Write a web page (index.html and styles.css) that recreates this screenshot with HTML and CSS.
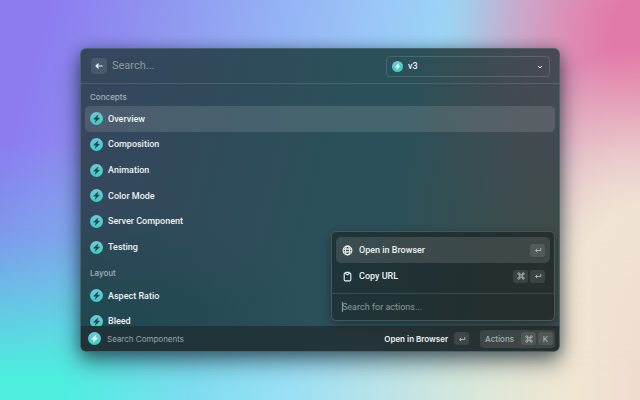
FILE: index.html
```html
<!DOCTYPE html>
<html lang="en">
<head>
<meta charset="utf-8">
<meta name="viewport" content="width=device-width, initial-scale=1">
<title>Search Components</title>
<link rel="stylesheet" href="styles.css">
</head>
<body>
<svg class="sprite" aria-hidden="true">
  <defs>
    <linearGradient id="teal" x1="0" y1="0" x2="0" y2="1">
      <stop offset="0" stop-color="#72c6da"/>
      <stop offset="1" stop-color="#39cfc0"/>
    </linearGradient>
    <symbol id="bolt" viewBox="0 0 26 26">
      <circle cx="13" cy="13" r="13" fill="url(#teal)"/>
      <path d="M15.800 5.600 6.800 14.200q-.5.7.4.8h4.600L9.800 20.600q0 .8.7.3l9-8.600q.5-.8-.4-.9h-4.500l2-5.300q0-.9-.8-.5Z" fill="currentColor"/>
    </symbol>
    <symbol id="return" viewBox="0 0 16 16">
      <path d="M13.500 4v5H3M6.500 5.500 3 9l3.500 3.500" fill="none" stroke="currentColor" stroke-width="2"/>
    </symbol>
    <symbol id="command" viewBox="0 0 16 16">
      <path d="M5.500 5.500h5v5h-5ZM5.500 5.500H4a2 2 0 1 1 1.500-1.500ZM10.500 5.500V4a2 2 0 1 1 1.500 1.500ZM10.500 10.500H12a2 2 0 1 1-1.500 1.500ZM5.500 10.500V12a2 2 0 1 1-1.500-1.500Z" fill="none" stroke="currentColor" stroke-width="2"/>
    </symbol>
  </defs>
</svg>
<main class="window">
  <header class="header">
    <button class="back" type="button" aria-label="Back">
      <svg class="glyph" viewBox="0 0 16 16"><path d="M14.500 8H2M6.500 4 2 8l4.500 4" fill="none" stroke="currentColor" stroke-width="2.400" stroke-linecap="round" stroke-linejoin="round"/></svg>
    </button>
    <input class="search" type="search" placeholder="Search..." aria-label="Search">
    <div class="version">
      <svg class="version-icon"><use href="#bolt"/></svg>
      <select class="version-select" aria-label="Version"><option>v3</option></select>
      <svg class="chevron" viewBox="0 0 8 8"><path d="m2 3 2 2 2-2" fill="none" stroke="currentColor" stroke-width="1"/></svg>
    </div>
  </header>

  <div class="results">
    <h2 class="section">Concepts</h2>
    <ul class="list concepts">
      <li><a class="item selected" href="#overview"><svg class="icon"><use href="#bolt"/></svg>Overview</a></li>
      <li><a class="item" href="#composition"><svg class="icon"><use href="#bolt"/></svg>Composition</a></li>
      <li><a class="item" href="#animation"><svg class="icon"><use href="#bolt"/></svg>Animation</a></li>
      <li><a class="item" href="#color-mode"><svg class="icon"><use href="#bolt"/></svg>Color Mode</a></li>
      <li><a class="item" href="#server-component"><svg class="icon"><use href="#bolt"/></svg>Server Component</a></li>
      <li><a class="item" href="#testing"><svg class="icon"><use href="#bolt"/></svg>Testing</a></li>
    </ul>
    <h2 class="section">Layout</h2>
    <ul class="list layout">
      <li><a class="item" href="#aspect-ratio"><svg class="icon"><use href="#bolt"/></svg>Aspect Ratio</a></li>
      <li><a class="item" href="#bleed"><svg class="icon"><use href="#bolt"/></svg>Bleed</a></li>
    </ul>
  </div>

  <footer class="footer">
    <svg class="icon light"><use href="#bolt"/></svg>
    <span class="command-name">Search Components</span>
    <button class="primary" type="button">Open in Browser
      <kbd class="key"><svg class="glyph"><use href="#return"/></svg></kbd>
    </button>
    <button class="actions" type="button"><span class="actions-label">Actions</span>
      <kbd class="key"><svg class="glyph"><use href="#command"/></svg></kbd>
      <kbd class="key">K</kbd>
    </button>
  </footer>

  <section class="popup" aria-label="Actions">
    <div class="menu">
      <button class="action current" type="button">
        <svg class="action-icon" viewBox="0 0 20 20"><g fill="none" stroke="currentColor" stroke-width="2"><circle cx="10" cy="10" r="8"/><ellipse cx="10" cy="10" rx="3.700" ry="8"/><path d="M2.500 7.500h15M2.500 12.500h15"/></g></svg>
        <span class="action-label">Open in Browser</span>
        <kbd class="key"><svg class="glyph"><use href="#return"/></svg></kbd>
      </button>
      <button class="action" type="button">
        <svg class="action-icon" viewBox="0 0 20 20"><g fill="none" stroke="currentColor" stroke-width="2" stroke-linejoin="round"><path d="M7 3.500H6a2 2 0 0 0-2 2V16a2 2 0 0 0 2 2h8a2 2 0 0 0 2-2V5.500a2 2 0 0 0-2-2h-1"/><path d="M7 2.500h6v2.300L10 7 7 4.800Z"/></g></svg>
        <span class="action-label">Copy URL</span>
        <kbd class="key"><svg class="glyph"><use href="#command"/></svg></kbd>
        <kbd class="key"><svg class="glyph"><use href="#return"/></svg></kbd>
      </button>
    </div>
    <input class="action-search" type="text" placeholder="Search for actions..." aria-label="Search for actions">
  </section>
</main>
</body>
</html>
```
FILE: styles.css
```css
* {
  box-sizing: border-box;
}

body {
  position: relative;
  margin: 0;
  min-height: 100vh;
  display: flex;
  align-items: center;
  justify-content: center;
  font: 500 9px/12px Roboto, Inter, sans-serif;
  color: #eef3f2;
  background: linear-gradient(90deg, #4eeedf 10%, #7edcf0 30%, #9ce0f6 46%, #c0e4e6 62%, #dfe8d8 77%, #f1e6d2 90%, #f0dcd2 100%);
}

/* Cool-to-pink band that fades into the base gradient below it */
body::before {
  content: "";
  position: absolute;
  inset: 0;
  background:
    radial-gradient(ellipse 28% 68% at 100% 80%, #f0e4d4 40%, rgba(240, 228, 214, 0) 100%),
    radial-gradient(ellipse 33% 66% at 102% 10%, #e27aa8 20%, rgba(226, 122, 168, 0) 100%),
    linear-gradient(106deg, #8c7cf0 7%, #9092f0 20%, #94b0f4 36%, #9ac6f8 50%, #9bd9f4 63%, #cfc6dc 78%, #dcc4d4 100%);
  -webkit-mask-image: linear-gradient(#000 35%, rgba(0, 0, 0, 0.75) 60%, transparent 94%);
  mask-image: linear-gradient(#000 35%, rgba(0, 0, 0, 0.75) 60%, transparent 94%);
}

.sprite {
  position: absolute;
  width: 0;
  height: 0;
}

button,
input,
select {
  margin: 0;
  border: 0;
  padding: 0;
  font: inherit;
  color: inherit;
  background: none;
  outline: 0;
}

.window {
  position: relative;
  width: 75%;
  min-width: 440px;
  border: 1px solid #4b6468;
  border-radius: 6px;
  overflow: hidden;
  background:
    radial-gradient(ellipse 30% 75% at 100% 0%, #494951 0%, rgba(73, 73, 81, 0) 100%),
    radial-gradient(ellipse 36% 100% at 100% 65%, #3e4b48 0%, rgba(62, 75, 72, 0) 100%),
    radial-gradient(ellipse 50% 50% at 0% 100%, #1b484c 0%, rgba(27, 72, 76, 0) 100%),
    linear-gradient(105deg, #36465d 5%, #304a5b 25%, #2b5059 50%, #2c5057 100%);
  box-shadow:
    0 10px 22px rgba(10, 25, 35, 0.5),
    0 2px 14px rgba(10, 25, 35, 0.35);
}

.header {
  display: flex;
  align-items: center;
  height: 35px;
  padding: 0 9px 0 10px;
  border-bottom: 1px solid rgba(255, 255, 255, 0.12);
}

.back {
  display: grid;
  place-items: center;
  width: 16px;
  height: 16px;
  border-radius: 4px;
  background: rgba(255, 255, 255, 0.1);
}

.glyph {
  width: 8px;
  height: 8px;
}

.search {
  flex: 1;
  min-width: 0;
  margin-left: 5px;
  font-size: 11px;
  font-weight: 400;
  line-height: 16px;
}

.search::placeholder,
.action-search::placeholder {
  color: #8d9c9f;
  opacity: 1;
}

.version {
  position: relative;
  width: 164px;
}

.version-select {
  display: block;
  width: 100%;
  height: 21px;
  padding: 0 20px 0 21px;
  border: 1px solid rgba(255, 255, 255, 0.14);
  border-radius: 4px;
  appearance: none;
}

.version-icon {
  position: absolute;
  left: 6px;
  top: 5px;
  width: 11px;
  height: 11px;
  color: #e8fbfa;
}

.chevron {
  position: absolute;
  right: 6px;
  top: 7px;
  width: 8px;
  height: 8px;
}

.results {
  height: 242px;
  overflow: hidden;
  padding: 0 4px;
}

.section {
  height: 23px;
  margin: 0;
  padding: 7px 5px 0;
  font-family: Inter, sans-serif;
  font-size: 8px;
  font-weight: 500;
  color: #a5b2b5;
}

.section:first-child {
  height: 22px;
}

.list {
  display: grid;
  grid-auto-rows: 1fr;
  margin: 0;
  padding: 0;
  list-style: none;
}

.concepts {
  height: 154px;
}

.layout {
  height: 51px;
}

.item {
  display: flex;
  align-items: center;
  gap: 5px;
  height: 100%;
  padding: 0 5px;
  border-radius: 5px;
  color: inherit;
  text-decoration: none;
}

.selected {
  background: rgba(255, 255, 255, 0.12);
}

.icon {
  flex: none;
  width: 13px;
  height: 13px;
  color: #264650;
}

.light {
  color: #e8fbfa;
}

.footer {
  display: flex;
  align-items: center;
  height: 25px;
  padding: 0 4px 0 7px;
  font-family: Inter, sans-serif;
  font-size: 8px;
  background: linear-gradient(90deg, #20333a, #22343a 50%, #2a302f);
}

.command-name {
  flex: 1;
  margin-left: 6px;
  font-weight: 400;
  color: #98a5a7;
}

.primary,
.actions {
  display: flex;
  align-items: center;
}

.primary {
  gap: 6px;
  font-weight: 600;
}

.actions {
  gap: 2px;
  height: 18px;
  margin-left: 11px;
  padding: 0 2px 0 5px;
  border-radius: 4px;
  color: #a9b1b1;
  background: rgba(255, 255, 255, 0.1);
}

.actions-label {
  margin-right: 5px;
}

.key {
  display: grid;
  place-items: center;
  width: 15px;
  height: 13px;
  border-radius: 3px;
  font: inherit;
  color: #a9b1b1;
  background: rgba(255, 255, 255, 0.1);
}

.popup {
  position: absolute;
  right: 4px;
  bottom: 30px;
  width: 224px;
  border: 1px solid #46575a;
  border-radius: 5px;
  background: linear-gradient(100deg, #1e353a, #222f30 60%, #262f2e);
  box-shadow: 0 3px 8px rgba(0, 0, 0, 0.35);
}

.menu {
  padding: 5px 4px 4px;
}

.action {
  display: flex;
  align-items: center;
  gap: 2px;
  width: 100%;
  height: 26px;
  padding: 0 5px 0 6px;
  border-radius: 5px;
  text-align: left;
}

.current {
  background: rgba(255, 255, 255, 0.12);
}

.action-icon {
  width: 11px;
  height: 11px;
}

.action-label {
  flex: 1;
  margin-left: 4px;
}

.action-search {
  display: block;
  width: 100%;
  height: 27px;
  padding: 0 10px;
  border-top: 1px solid rgba(255, 255, 255, 0.12);
  font-weight: 400;
  background: linear-gradient(#8d9c9f, #8d9c9f) 10px center / 1px 10px no-repeat;
}
```
